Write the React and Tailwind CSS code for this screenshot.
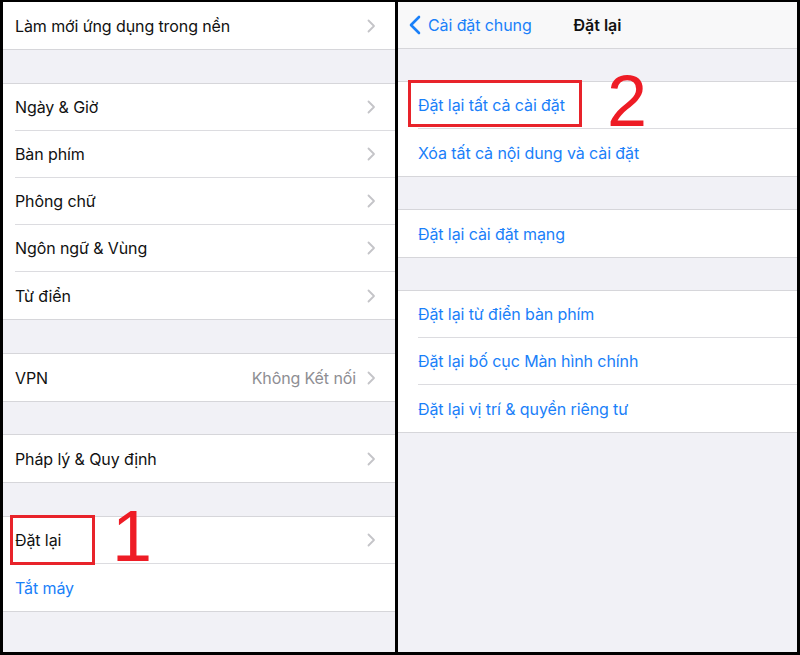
import React from "react";

const FONT = { fontFamily: "Inter, 'Noto Sans', 'Liberation Sans', sans-serif" };

function Chevron() {
  return (
    <svg width="9" height="14" viewBox="0 0 9 14" className="shrink-0">
      <polyline points="1.5,1.5 7,7 1.5,12.5" fill="none" stroke="#c4c4c8" strokeWidth="1.8" strokeLinecap="round" strokeLinejoin="round" />
    </svg>
  );
}

function Row({ label, value, chevron, blue, last, inset, pl }) {
  return (
    <div className="flex flex-col h-[47px] bg-white">
      <div className={`flex-1 flex items-center pr-[19px] ${pl}`}>
        <span className={`text-[16px] tracking-[-0.1px] ${blue ? "text-[#1a80f9]" : "text-[#111]"}`}>{label}</span>
        <div className="flex-1" />
        {value && <span className="text-[16px] tracking-[-0.1px] text-[#8e8e93] mr-[11px]">{value}</span>}
        {chevron && <Chevron />}
      </div>
      {!last && <div className={`h-px bg-[#dcdce0] ${inset}`} />}
    </div>
  );
}

function Group({ rows, pl = "pl-[12px]", inset = "ml-[12px]" }) {
  return (
    <div className="border-y border-[#d6d6da] bg-white">
      {rows.map((r, i) => (
        <Row key={i} {...r} pl={pl} inset={inset} last={i === rows.length - 1} />
      ))}
    </div>
  );
}

export default function App() {
  return (
    <div className="w-[800px] h-[655px] bg-black flex gap-[3px] pt-[2px] pb-[3px] px-[3px] overflow-hidden" style={FONT}>
      {/* Left panel */}
      <div className="w-[392px] h-full bg-[#f1f1f6] flex flex-col">
        <div className="border-b border-[#d6d6da] bg-white">
          <div className="h-[47px] flex items-center pl-[12px] pr-[19px]">
            <span className="text-[16px] tracking-[-0.1px] text-[#111]">Làm mới ứng dụng trong nền</span>
            <div className="flex-1" />
            <Chevron />
          </div>
        </div>
        <div className="h-[33px]" />
        <Group
          rows={[
            { label: "Ngày & Giờ", chevron: true },
            { label: "Bàn phím", chevron: true },
            { label: "Phông chữ", chevron: true },
            { label: "Ngôn ngữ & Vùng", chevron: true },
            { label: "Từ điển", chevron: true },
          ]}
        />
        <div className="h-[33px]" />
        <Group rows={[{ label: "VPN", value: "Không Kết nối", chevron: true }]} />
        <div className="h-[32px]" />
        <Group rows={[{ label: "Pháp lý & Quy định", chevron: true }]} />
        <div className="h-[33px]" />
        <div className="relative">
          <Group
            rows={[
              { label: "Đặt lại", chevron: true },
              { label: "Tắt máy", blue: true },
            ]}
          />
          <div className="absolute left-[7px] top-[-1px] w-[85px] h-[50px] border-[3px] border-[#e8232a]" />
          <div
            className="absolute left-[109px] top-[-16px] text-[#ee1c25] text-[72px] leading-none"
            style={{ fontFamily: "'Liberation Sans', Arial, sans-serif" }}
          >
            1
          </div>
        </div>
      </div>

      {/* Right panel */}
      <div className="w-[399px] h-full bg-[#f1f1f6] flex flex-col">
        <div className="h-[47px] bg-[#f8f8f9] border-b border-[#d6d6da] relative flex items-center justify-center">
          <div className="absolute left-[11px] top-0 h-full flex items-center gap-[7px]">
            <svg width="12" height="20" viewBox="0 0 12 20">
              <polyline points="10,2 2,10 10,18" fill="none" stroke="#1a80f9" strokeWidth="2.6" strokeLinecap="round" strokeLinejoin="round" />
            </svg>
            <span className="text-[16px] tracking-[-0.1px] text-[#1a80f9]">Cài đặt chung</span>
          </div>
          <span className="text-[16px] font-semibold text-[#111]">Đặt lại</span>
        </div>
        <div className="h-[32px]" />
        <div className="relative">
          <Group
            pl="pl-[20px]"
            inset="ml-[20px]"
            rows={[
              { label: "Đặt lại tất cả cài đặt", blue: true },
              { label: "Xóa tất cả nội dung và cài đặt", blue: true },
            ]}
          />
          <div className="absolute left-[10px] top-[-1px] w-[174px] h-[47px] border-[3px] border-[#e8232a]" />
          <div
            className="absolute left-[209px] top-[-16px] text-[#ee1c25] text-[72px] leading-none"
            style={{ fontFamily: "'Liberation Sans', Arial, sans-serif" }}
          >
            2
          </div>
        </div>
        <div className="h-[32px]" />
        <Group pl="pl-[20px]" inset="ml-[20px]" rows={[{ label: "Đặt lại cài đặt mạng", blue: true }]} />
        <div className="h-[32px]" />
        <Group
          pl="pl-[20px]"
          inset="ml-[20px]"
          rows={[
            { label: "Đặt lại từ điển bàn phím", blue: true },
            { label: "Đặt lại bố cục Màn hình chính", blue: true },
            { label: "Đặt lại vị trí & quyền riêng tư", blue: true },
          ]}
        />
      </div>
    </div>
  );
}
